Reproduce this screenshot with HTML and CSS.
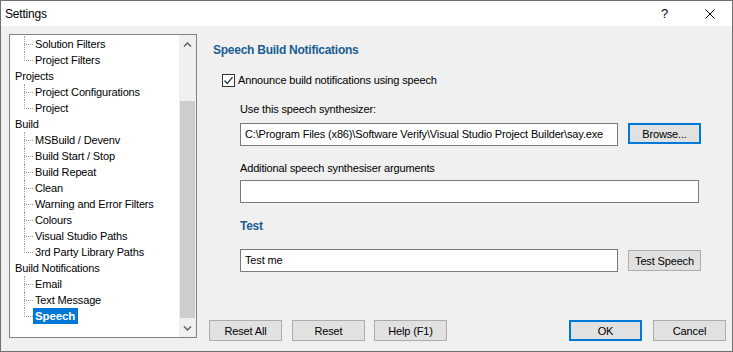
FILE: index.html
```html
<!DOCTYPE html>
<html>
<head>
<meta charset="utf-8">
<title>Settings</title>
<link rel="stylesheet" href="styles.css">
</head>
<body>
<div class="window">
  <div class="titlebar">
    <span class="title">Settings</span>
    <span class="cap help">?</span>
    <span class="cap close"><svg width="10" height="10" viewBox="0 0 10 10"><path d="M0.5 0.5 L9.5 9.5 M9.5 0.5 L0.5 9.5" stroke="#000" stroke-width="1" fill="none"/></svg></span>
  </div>
  <div class="body">
    <div class="tree">
      <div class="items">
        <div class="node child">Solution Filters</div>
        <div class="node child last">Project Filters</div>
        <div class="node top">Projects</div>
        <div class="node child">Project Configurations</div>
        <div class="node child last">Project</div>
        <div class="node top">Build</div>
        <div class="node child">MSBuild / Devenv</div>
        <div class="node child">Build Start / Stop</div>
        <div class="node child">Build Repeat</div>
        <div class="node child">Clean</div>
        <div class="node child">Warning and Error Filters</div>
        <div class="node child">Colours</div>
        <div class="node child">Visual Studio Paths</div>
        <div class="node child last">3rd Party Library Paths</div>
        <div class="node top">Build Notifications</div>
        <div class="node child">Email</div>
        <div class="node child">Text Message</div>
        <div class="node child last"><span class="sel">Speech</span></div>
      </div>
      <div class="scrollbar">
        <div class="arrow"><svg width="17" height="17" viewBox="0 0 17 17"><polyline points="5,11.5 8.5,8 12,11.5" fill="none" stroke="#606060" stroke-width="1.5"/></svg></div>
        <div class="track"><div class="thumb"></div></div>
        <div class="arrow"><svg width="17" height="17" viewBox="0 0 17 17"><polyline points="5,6.5 8.5,10 12,6.5" fill="none" stroke="#606060" stroke-width="1.5"/></svg></div>
      </div>
    </div>
    <div class="panel">
      <div class="heading">Speech Build Notifications</div>
      <div class="check-row">
        <svg class="box" width="13" height="13" viewBox="0 0 13 13"><rect x="0.5" y="0.5" width="12" height="12" fill="#fff" stroke="#333"/><polyline points="2.5,6.5 5.3,9.5 10.5,3.2" fill="none" stroke="#333" stroke-width="1.3"/></svg>
        <span>Announce build notifications using speech</span>
      </div>
      <div class="label l1">Use this speech synthesizer:</div>
      <div class="field-row f1">
        <div class="input short">C:\Program Files (x86)\Software Verify\Visual Studio Project Builder\say.exe</div>
        <div class="btn default">Browse...</div>
      </div>
      <div class="label l2">Additional speech synthesiser arguments</div>
      <div class="field-row f2">
        <div class="input wide"></div>
      </div>
      <div class="heading sub">Test</div>
      <div class="field-row f3">
        <div class="input short">Test me</div>
        <div class="btn">Test Speech</div>
      </div>
      <div class="buttons">
        <div class="btn">Reset All</div>
        <div class="btn">Reset</div>
        <div class="btn">Help (F1)</div>
        <div class="spacer"></div>
        <div class="btn default">OK</div>
        <div class="btn">Cancel</div>
      </div>
    </div>
  </div>
</div>
</body>
</html>
```
FILE: styles.css
```css
* { box-sizing: border-box; }
html, body { margin: 0; padding: 0; }
body {
  font-family: "Liberation Sans", Arial, sans-serif;
  font-size: 11px;
  letter-spacing: -0.15px;
  color: #000;
  background: #fff;
}
.window {
  width: 733px;
  height: 352px;
  border: 1px solid #707070;
  display: flex;
  flex-direction: column;
  background: #f0f0f0;
}
.titlebar {
  height: 25px;
  flex: none;
  background: #fff;
  display: flex;
  align-items: center;
  padding-left: 4px;
}
.title { flex: 1; font-size: 12px; letter-spacing: -0.2px; }
.cap {
  width: 45px;
  height: 25px;
  display: flex;
  align-items: center;
  justify-content: center;
}
.help { font-size: 13px; letter-spacing: 0; }
.close svg { display: block; margin-top: 1px; }
.body {
  flex: 1;
  display: flex;
  align-items: flex-start;
}
.tree {
  width: 188px;
  height: 304px;
  margin: 8px 0 0 8px;
  border: 1px solid #828282;
  background: #fff;
  display: flex;
  flex: none;
}
.items {
  flex: 1;
  padding-top: 1px;
  overflow: hidden;
}
.node {
  height: 16px;
  line-height: 16px;
  white-space: nowrap;
}
.top { padding-left: 5px; }
.child {
  position: relative;
  padding-left: 25px;
}
.child::before {
  content: "";
  position: absolute;
  left: 14px;
  top: 8px;
  width: 9px;
  border-top: 1px dotted #a0a0a0;
}
.child::after {
  content: "";
  position: absolute;
  left: 14px;
  top: 0;
  height: 16px;
  border-left: 1px dotted #a0a0a0;
}
.child.last::after { height: 9px; }
.sel {
  display: inline-block;
  height: 16px;
  margin-left: -2px;
  padding: 0 3px 0 2px;
  background: #0078d7;
  color: #fff;
  font-weight: bold;
  font-size: 11.5px;
}
.scrollbar {
  width: 17px;
  flex: none;
  background: #f0f0f0;
  display: flex;
  flex-direction: column;
}
.arrow { height: 17px; flex: none; }
.arrow svg { display: block; }
.track { flex: 1; padding: 0 1px 0 1px; }
.thumb {
  margin-top: 49px;
  height: 217px;
  background: #cdcdcd;
}
.panel {
  flex: 1;
  display: flex;
  flex-direction: column;
  padding: 0 6px 0 12px;
}
.heading {
  margin: 16px 0 0 4px;
  line-height: 16px;
  height: 16px;
  font-weight: bold;
  font-size: 12px;
  letter-spacing: -0.25px;
  color: #1a5e94;
}
.heading.sub { margin: 15px 0 0 31px; }
.check-row {
  margin: 14px 0 0 13px;
  height: 16px;
  display: flex;
  align-items: center;
  gap: 3px;
}
.box { display: block; flex: none; }
.label {
  margin-left: 31px;
  line-height: 16px;
  height: 16px;
}
.l1 { margin-top: 13px; }
.l2 { margin-top: 14px; }
.field-row {
  margin-left: 31px;
  display: flex;
  align-items: flex-start;
  gap: 10px;
}
.f1 { margin-top: 6px; }
.f2 { margin-top: 4px; }
.f3 { margin-top: 15px; align-items: center; }
.input {
  height: 23px;
  border: 1px solid #7a7a7a;
  background: #fff;
  padding: 0 4px;
  line-height: 21px;
  white-space: nowrap;
  overflow: hidden;
}
.input.short { width: 378px; }
.input.wide { width: 459px; }
.btn {
  width: 73px;
  height: 21px;
  border: 1px solid #adadad;
  background: #e1e1e1;
  display: flex;
  align-items: center;
  justify-content: center;
  flex: none;
}
.btn.default { border: 2px solid #0078d7; }
.buttons {
  margin-top: 48px;
  display: flex;
  gap: 10px;
}
.spacer { flex: 1; }
.buttons .btn:nth-child(3) { margin-left: -1px; }
.buttons .btn:last-child { margin-left: 1px; }
```
